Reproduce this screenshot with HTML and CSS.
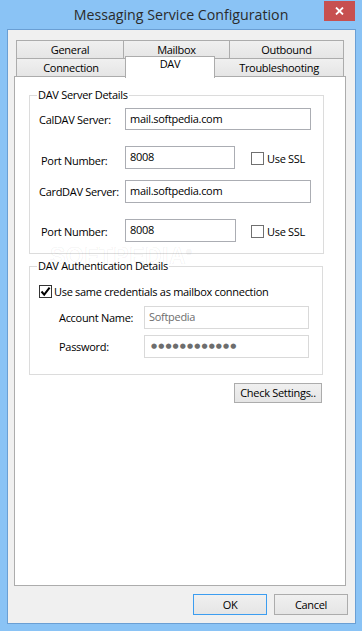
FILE: index.html
```html
<!DOCTYPE html>
<html>
<head>
<meta charset="utf-8">
<title>Messaging Service Configuration</title>
<link rel="stylesheet" href="styles.css">
</head>
<body>
<div class="window">
  <div class="titlebar">
    <div class="tb-left"></div>
    <div class="title">Messaging Service Configuration</div>
    <div class="tb-right">
      <div class="close">
        <svg width="9" height="8" viewBox="0 0 9 8"><path d="M1 0.5 L8 7.5 M8 0.5 L1 7.5" stroke="#fff" stroke-width="1.8" fill="none"/></svg>
      </div>
    </div>
  </div>
  <div class="client">
    <div class="tabs">
      <div class="tabrow">
        <div class="tab t-general">General</div>
        <div class="tab t-mailbox">Mailbox</div>
        <div class="tab t-outbound">Outbound</div>
      </div>
      <div class="tabrow row2">
        <div class="tab t-connection">Connection</div>
        <div class="tab t-dav active">DAV</div>
        <div class="tab t-trouble">Troubleshooting</div>
      </div>
    </div>
    <div class="panel">
      <fieldset class="group g1">
        <legend>DAV Server Details</legend>
        <div class="rows">
          <div class="row r1">
            <span class="lbl">CalDAV Server:</span>
            <div class="input wide">mail.softpedia.com</div>
          </div>
          <div class="row r2">
            <span class="lbl port">Port Number:</span>
            <div class="input port-in">8008</div>
            <span class="cb"></span>
            <span class="cb-label">Use SSL</span>
          </div>
          <div class="row r3">
            <span class="lbl">CardDAV Server:</span>
            <div class="input wide">mail.softpedia.com</div>
          </div>
          <div class="row r4">
            <span class="lbl port port2">Port Number:</span>
            <div class="input port-in port-in2">8008</div>
            <span class="cb"></span>
            <span class="cb-label">Use SSL</span>
          </div>
        </div>
      </fieldset>
      <div class="watermark">SOFTPEDIA<sup>®</sup></div>
      <fieldset class="group g2">
        <legend>DAV Authentication Details</legend>
        <div class="rows">
          <div class="row a1">
            <span class="cb checked"><svg width="11" height="11" viewBox="0 0 11 11"><path d="M1.5 5.5 L4.2 8.6 L9.6 1.6" stroke="#000" stroke-width="2" fill="none"/></svg></span>
            <span class="cb-label same">Use same credentials as mailbox connection</span>
          </div>
          <div class="row a2">
            <span class="lbl2">Account Name:</span>
            <div class="input disabled auth-in">Softpedia</div>
          </div>
          <div class="row a3">
            <span class="lbl2">Password:</span>
            <div class="input disabled auth-in dots">●●●●●●●●●●●●</div>
          </div>
        </div>
      </fieldset>
      <button class="btn check">Check Settings..</button>
    </div>
    <div class="footer">
      <button class="btn ok">OK</button>
      <button class="btn cancel">Cancel</button>
    </div>
  </div>
</div>
</body>
</html>
```
FILE: styles.css
```css
* { box-sizing: border-box; }
html, body { margin: 0; padding: 0; }
body {
  width: 362px;
  height: 631px;
  overflow: hidden;
  background: #8ac3f5;
  font-family: "Open Sans", "Noto Sans", sans-serif;
  font-size: 11px;
  letter-spacing: -0.3px;
  color: #000;
}
.window { display: flex; flex-direction: column; height: 631px; }

/* title bar */
.titlebar {
  height: 29px;
  display: grid;
  grid-template-columns: 1fr auto 1fr;
}
.title {
  font-size: 14.2px;
  letter-spacing: 0;
  line-height: 30px;
  color: #2b2b2b;
  white-space: nowrap;
}
.tb-right { display: flex; justify-content: flex-end; align-items: flex-start; }
.close {
  width: 31px;
  height: 20px;
  margin-top: 1px;
  margin-right: 7px;
  background: #c75050;
  display: flex;
  align-items: center;
  justify-content: center;
}

/* client area */
.client {
  margin: 0 6px 7px 7px;
  height: 595px;
  border: 1px solid #6a9fd4;
  background: #f0f0f0;
  display: flex;
  flex-direction: column;
}

/* tabs */
.tabs { margin: 10px 0 0 8px; }
.tabrow { display: flex; height: 19px; }
.row2 { margin-top: -1px; }
.tab {
  height: 19px;
  border: 1px solid #acacac;
  background: linear-gradient(#f0f0f0, #e5e5e5);
  margin-left: -1px;
  text-align: center;
  line-height: 17px;
  white-space: nowrap;
}
.tab:first-child { margin-left: 0; }
.t-general { width: 108px; }
.t-mailbox { width: 107px; }
.t-outbound { width: 115px; }
.t-connection { width: 110px; }
.t-dav { width: 90px; }
.t-trouble { width: 130px; }
.tab.active {
  position: relative;
  z-index: 1;
  margin-top: -2px;
  height: 22px;
  background: #fff;
  border-bottom: none;
  line-height: 14px;
}

/* panel */
.panel {
  position: relative;
  margin: -1px 0 0 6px;
  width: 332px;
  height: 510px;
  border: 1px solid #acacac;
  background: #fff;
  display: flex;
  flex-direction: column;
}

.group {
  border: 1px solid #dcdcdc;
  padding: 0 0 0 9px;
  min-width: 0;
}
.group legend {
  padding: 0 1px;
  margin-left: -2px;
  line-height: 16px;
}
.g1 { margin: 10px 21px 0 14px; height: 167px; }
.g2 { margin: 4px 22px 0 14px; height: 117px; }

.rows { display: flex; flex-direction: column; }
.row { display: flex; align-items: center; }
.r1 { margin-top: 5px; height: 22px; }
.r2 { margin-top: 16px; height: 23px; }
.r3 { margin-top: 11px; height: 23px; }
.r4 { margin-top: 16px; height: 23px; }

.lbl { width: 86px; white-space: nowrap; }
.lbl.port { padding-left: 2px; padding-top: 5px; }
.lbl.port2 { padding-top: 2px; }

.input {
  height: 100%;
  border: 1px solid #abadb3;
  background: #fff;
  padding: 1px 4px;
  line-height: 17px;
  white-space: nowrap;
}
.wide { width: 186px; }
.port-in { width: 110px; }
.port-in2 { width: 111px; }

.cb {
  width: 13px;
  height: 13px;
  border: 1px solid #707070;
  background: #fff;
  flex: none;
  display: flex;
  align-items: center;
  justify-content: center;
}
.r2 .cb, .r4 .cb { margin-left: 16px; margin-top: 2px; }
.r4 .cb { margin-left: 15px; }
.cb-label { margin-left: 3px; white-space: nowrap; }
.r2 .cb-label, .r4 .cb-label { padding-top: 2px; }
.cb.checked { border-color: #333; }

.a1 { margin-top: 9px; height: 16px; }
.a2 { margin-top: 7px; height: 23px; padding-left: 20px; }
.a3 { margin-top: 6px; height: 23px; padding-left: 20px; }
.cb-label.same { margin-left: 2px; }
.lbl2 { width: 85px; white-space: nowrap; }
.input.disabled { border-color: #d9d9d9; color: #6d6d6d; }
.auth-in { width: 165px; }
.dots { font-family: "DejaVu Sans", sans-serif; font-size: 7px; letter-spacing: 1.1px; color: #555; line-height: 19px; padding-left: 6px; }

.watermark {
  position: absolute;
  left: 35px;
  top: 166px;
  font-family: "Liberation Sans", sans-serif;
  font-weight: bold;
  font-size: 23px;
  letter-spacing: 0.5px;
  color: rgba(0, 0, 0, 0.02);
  -webkit-text-stroke: 1px rgba(0, 0, 0, 0.05);
  pointer-events: none;
}
.watermark sup { font-size: 7px; }

/* buttons */
.btn {
  font: inherit;
  letter-spacing: inherit;
  color: #000;
  padding: 0;
  border: 1px solid #acacac;
  background: linear-gradient(#f0f0f0, #e5e5e5);
  height: 21px;
  line-height: 18px;
}
.check {
  align-self: flex-end;
  margin: 8px 23px 0 0;
  width: 88px;
  height: 20px;
}
.footer {
  display: flex;
  justify-content: flex-end;
  gap: 7px;
  margin-top: 8px;
  padding-right: 7px;
}
.ok, .cancel { width: 74px; }
.ok { border-color: #3c9df0; }
```
